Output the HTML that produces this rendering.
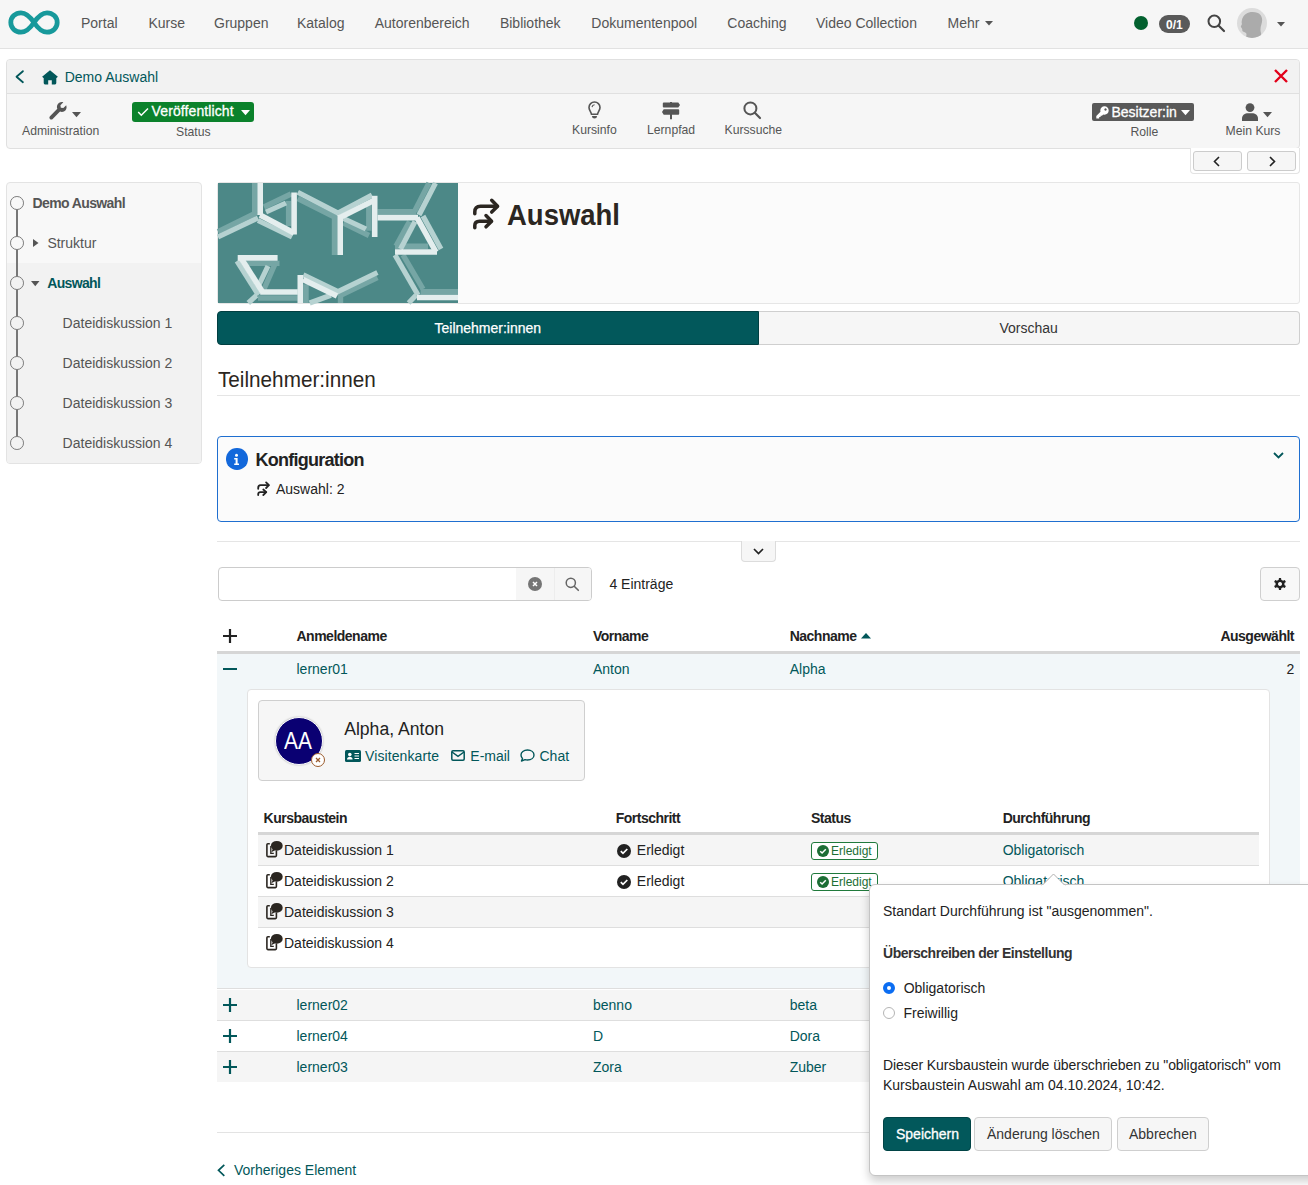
<!DOCTYPE html>
<html><head><meta charset="utf-8">
<style>
html,body{margin:0;padding:0;}
body{width:1308px;height:1185px;position:relative;overflow:hidden;background:#fff;font-family:"Liberation Sans",sans-serif;color:#222;}
.a{position:absolute;white-space:nowrap;line-height:1;}
.b{position:absolute;box-sizing:border-box;}
svg{position:absolute;overflow:visible;}
.nav{color:#555;font-size:14px;}
.lbl{color:#555;font-size:12.2px;}
.tl{color:#02575a;}
.th{font-weight:700;font-size:14px;letter-spacing:-0.5px;color:#222;}
</style></head><body>

<!-- NAV -->
<div class="b" style="left:0;top:0;width:1308px;height:49px;background:#f6f6f6;border-bottom:1px solid #e2e2e2;"></div>
<svg style="left:8px;top:10px" width="52" height="25" viewBox="0 0 52 25"><path d="M26,12.5 C22,6.5 18,2.8 13,2.8 C7.4,2.8 2.8,7 2.8,12.5 C2.8,18 7.4,22.2 13,22.2 C18,22.2 22,18.5 26,12.5 C30,6.5 34,2.8 39,2.8 C44.6,2.8 49.2,7 49.2,12.5 C49.2,18 44.6,22.2 39,22.2 C34,22.2 30,18.5 26,12.5 Z" fill="none" stroke="#17999b" stroke-width="4.8"/></svg>
<div class="a nav" style="left:81px;top:15.5px">Portal</div>
<div class="a nav" style="left:148.5px;top:15.5px">Kurse</div>
<div class="a nav" style="left:214px;top:15.5px">Gruppen</div>
<div class="a nav" style="left:297px;top:15.5px">Katalog</div>
<div class="a nav" style="left:374.7px;top:15.5px">Autorenbereich</div>
<div class="a nav" style="left:499.9px;top:15.5px">Bibliothek</div>
<div class="a nav" style="left:591.3px;top:15.5px">Dokumentenpool</div>
<div class="a nav" style="left:727.3px;top:15.5px">Coaching</div>
<div class="a nav" style="left:816px;top:15.5px">Video Collection</div>
<div class="a nav" style="left:947.6px;top:15.5px">Mehr</div>
<svg style="left:985px;top:21px" width="8" height="5" viewBox="0 0 8 5"><path d="M0,0 H8 L4,4.5 Z" fill="#555"/></svg>
<div class="b" style="left:1134px;top:16px;width:14px;height:14px;border-radius:50%;background:#03612f"></div>
<div class="b" style="left:1159px;top:15px;width:31px;height:18px;border-radius:9px;background:#5a5a5a"></div>
<div class="a" style="left:1166px;top:18.5px;font-size:12px;font-weight:700;color:#fff">0/1</div>
<svg style="left:1207px;top:13.5px" width="18" height="18" viewBox="0 0 18 18"><circle cx="7.3" cy="7.3" r="5.8" fill="none" stroke="#444" stroke-width="2"/><path d="M11.5,11.5 L17,17" stroke="#444" stroke-width="2.2" stroke-linecap="round"/></svg>
<div class="b" style="left:1237px;top:8px;width:30px;height:30px;border-radius:50%;background:#dcdcdc;overflow:hidden"><svg style="left:0;top:0" width="30" height="30" viewBox="0 0 30 30"><path d="M12,4.5 C16,3.5 21,4 23.5,7 C25.5,9.5 25.5,13 24.5,16 C23.5,19 23,22 24,25 L25,31 H9 L9.5,26 C9,24.5 7.5,24 6,23.5 C5,23 5.5,21.5 5,20.5 C4.5,19.5 3.5,19 4,18 L5,16 C4.5,15 4.5,13.5 5,12 C5.5,9 8,5.5 12,4.5 Z" fill="#ababab"/></svg></div>
<svg style="left:1277px;top:21.5px" width="8" height="5" viewBox="0 0 8 5"><path d="M0,0 H8 L4,4.5 Z" fill="#555"/></svg>

<!-- TOOLBAR -->
<div class="b" style="left:6px;top:59px;width:1294px;height:90px;border:1px solid #e0e0e0;border-radius:4px;background:#f6f6f6;overflow:hidden">
  <div class="b" style="left:0;top:0;width:100%;height:34px;background:#f2f2f2;border-bottom:1px solid #e0e0e0"></div>
</div>
<svg style="left:13.6px;top:69px" width="11" height="16" viewBox="0 0 11 16"><path d="M8.9,2.2 L2.5,7.7 L8.9,13.2" fill="none" stroke="#02575a" stroke-width="1.8" stroke-linecap="round" stroke-linejoin="round"/></svg>
<svg style="left:41.5px;top:69.5px" width="16" height="15" viewBox="0 0 16 15"><path d="M8,0.2 L15.9,6.7 L14.5,8.1 L14.3,7.9 V13.1 Q14.3,14.4 13,14.4 H9.8 V10.2 H6.2 V14.4 H3 Q1.7,14.4 1.7,13.1 V7.9 L1.5,8.1 L0.1,6.7 Z" fill="#02575a"/></svg>
<div class="a tl" style="left:64.7px;top:69.8px;font-size:14px">Demo Auswahl</div>

<svg style="left:49px;top:101.6px" width="18.4" height="17.6" viewBox="0 0 19 18"><path d="M17.8,3.2 L14.8,6.2 L12.2,5.8 L11.8,3.2 L14.8,0.2 C12.4,-0.5 9.6,0.6 8.6,3 C8,4.4 8.1,5.8 8.6,7 L1,14.6 C0.2,15.4 0.2,16.7 1,17.4 C1.8,18.2 3,18.2 3.8,17.4 L11.4,9.8 C12.6,10.3 14,10.4 15.4,9.8 C17.8,8.8 18.8,6 17.8,3.2 Z" fill="#555"/></svg>
<svg style="left:72.4px;top:111.7px" width="9" height="5.5" viewBox="0 0 9 5.5"><path d="M0,0 H9 L4.5,5.3 Z" fill="#555"/></svg>
<div class="a lbl" style="left:22px;top:124.5px">Administration</div>

<div class="b" style="left:132px;top:102px;width:122px;height:20px;border-radius:3px;background:#0b822b"></div>
<svg style="left:136.5px;top:106.5px" width="12" height="10" viewBox="0 0 12 10"><path d="M1.2,5 L4.3,8.2 L11,1.5" fill="none" stroke="#fff" stroke-width="1.5"/></svg>
<div class="a" style="left:151.6px;top:104.3px;font-size:14px;color:#fff;letter-spacing:0.1px;-webkit-text-stroke:0.3px #fff">Veröffentlicht</div>
<svg style="left:240.8px;top:109.5px" width="9" height="5.5" viewBox="0 0 9 5.5"><path d="M0,0 H9 L4.5,5.3 Z" fill="#fff"/></svg>
<div class="a lbl" style="left:176px;top:126px">Status</div>

<svg style="left:587.6px;top:101px" width="13" height="18" viewBox="0 0 13 18"><path d="M6.5,1 C3.4,1 1,3.4 1,6.5 C1,9.3 3,10.8 3.5,13.3 H9.5 C10,10.8 12,9.3 12,6.5 C12,3.4 9.6,1 6.5,1 Z" fill="none" stroke="#555" stroke-width="1.6"/><path d="M3.9,15 H9.1 Q8.9,17.6 6.5,17.6 Q4.1,17.6 3.9,15 Z" fill="#555"/><path d="M4,6.1 Q4.4,3.8 6.6,3.7" fill="none" stroke="#555" stroke-width="1.1"/></svg>
<div class="a lbl" style="left:572px;top:123.6px">Kursinfo</div>
<svg style="left:661.5px;top:101.5px" width="18" height="18" viewBox="0 0 18 18"><path d="M8,0 H10 V0.6 H16.3 L18,3 L16.3,5.4 H1.8 Q0.8,5.4 0.8,4.4 V1.6 Q0.8,0.6 1.8,0.6 H8 Z M1.7,7.3 H16.2 Q17.2,7.3 17.2,8.3 V11.8 Q17.2,12.8 16.2,12.8 H1.7 L0,10 Z M8,12.8 H10 V17.3 H8 Z" fill="#555"/></svg>
<div class="a lbl" style="left:647px;top:123.6px">Lernpfad</div>
<svg style="left:743px;top:101px" width="18" height="18" viewBox="0 0 18 18"><circle cx="7.4" cy="7.4" r="6" fill="none" stroke="#555" stroke-width="2"/><path d="M11.8,11.8 L17,17" stroke="#555" stroke-width="2.2" stroke-linecap="round"/></svg>
<div class="a lbl" style="left:724.5px;top:123.6px">Kurssuche</div>

<div class="b" style="left:1092px;top:103px;width:102px;height:18px;border-radius:2px;background:#595959"></div>
<svg style="left:1095.5px;top:105.5px" width="13" height="13" viewBox="0 0 13 13"><path d="M8.5,0.3 C10.8,0.3 12.7,2.2 12.7,4.5 C12.7,6.8 10.8,8.7 8.5,8.7 C8,8.7 7.6,8.6 7.2,8.5 L6,9.7 H4.6 V11.1 H3.2 V12.5 H0.3 V10 L4.5,5.8 C4.4,5.4 4.3,5 4.3,4.5 C4.3,2.2 6.2,0.3 8.5,0.3 Z M9.5,2.3 A1.2,1.2 0 1,0 9.51,2.3 Z" fill="#fff"/></svg>
<div class="a" style="left:1111.5px;top:104.6px;font-size:14px;color:#fff;-webkit-text-stroke:0.3px #fff">Besitzer:in</div>
<svg style="left:1181px;top:109.5px" width="9" height="5.5" viewBox="0 0 9 5.5"><path d="M0,0 H9 L4.5,5.3 Z" fill="#fff"/></svg>
<div class="a lbl" style="left:1130.4px;top:126px">Rolle</div>
<svg style="left:1241.5px;top:102.5px" width="16" height="18" viewBox="0 0 16 18"><circle cx="8" cy="4.6" r="4.4" fill="#555"/><path d="M0,18 V15.5 C0,12 3,10.2 6,10.2 H10 C13,10.2 16,12 16,15.5 V18 Z" fill="#555"/></svg>
<svg style="left:1263px;top:112px" width="9" height="5.5" viewBox="0 0 9 5.5"><path d="M0,0 H9 L4.5,5.3 Z" fill="#555"/></svg>
<div class="a lbl" style="left:1225.6px;top:124.7px">Mein Kurs</div>
<svg style="left:1274px;top:68.5px" width="14" height="14" viewBox="0 0 14 14"><path d="M1,1 L13,13 M13,1 L1,13" stroke="#e2001a" stroke-width="2.4"/></svg>

<!-- PAGER -->
<div class="b" style="left:1189.5px;top:148px;width:110.5px;height:25.5px;border:1px solid #e3e3e3;border-top:none;border-radius:0 0 4px 4px;background:#fff"></div>
<div class="b" style="left:1192.5px;top:151.4px;width:49px;height:19.5px;border:1px solid #ccc;border-radius:3px;background:#f6f6f6"></div>
<div class="b" style="left:1247.4px;top:151.4px;width:49px;height:19.5px;border:1px solid #ccc;border-radius:3px;background:#f6f6f6"></div>
<svg style="left:1213px;top:155.5px" width="7" height="11" viewBox="0 0 7 11"><path d="M6,1 L1.5,5.5 L6,10" fill="none" stroke="#222" stroke-width="1.6"/></svg>
<svg style="left:1268.5px;top:155.5px" width="7" height="11" viewBox="0 0 7 11"><path d="M1,1 L5.5,5.5 L1,10" fill="none" stroke="#222" stroke-width="1.6"/></svg>

<!-- MENU -->
<div class="b" style="left:6px;top:182px;width:196px;height:282px;border:1px solid #e3e3e3;border-radius:4px;background:#f8f8f8;overflow:hidden">
  <div class="b" style="left:0;top:80px;width:100%;height:201px;background:#f2f2f2"></div>
</div>
<div class="b" style="left:16px;top:203px;width:2px;height:240px;background:#777"></div>
<div class="b" style="left:10.2px;top:196px;width:13.8px;height:13.8px;border:1.8px solid #7a7a7a;border-radius:50%;background:#f8f8f8"></div>
<div class="b" style="left:10.2px;top:236px;width:13.8px;height:13.8px;border:1.8px solid #7a7a7a;border-radius:50%;background:#f8f8f8"></div>
<div class="b" style="left:10.2px;top:276px;width:13.8px;height:13.8px;border:1.8px solid #7a7a7a;border-radius:50%;background:#f2f2f2"></div>
<div class="b" style="left:10.2px;top:316px;width:13.8px;height:13.8px;border:1.8px solid #7a7a7a;border-radius:50%;background:#f2f2f2"></div>
<div class="b" style="left:10.2px;top:356px;width:13.8px;height:13.8px;border:1.8px solid #7a7a7a;border-radius:50%;background:#f2f2f2"></div>
<div class="b" style="left:10.2px;top:396px;width:13.8px;height:13.8px;border:1.8px solid #7a7a7a;border-radius:50%;background:#f2f2f2"></div>
<div class="b" style="left:10.2px;top:436px;width:13.8px;height:13.8px;border:1.8px solid #7a7a7a;border-radius:50%;background:#f2f2f2"></div>
<div class="a" style="left:32.6px;top:195.9px;font-size:14px;font-weight:700;color:#555;letter-spacing:-0.62px">Demo Auswahl</div>
<svg style="left:33px;top:239px" width="6" height="8" viewBox="0 0 6 8"><path d="M0,0 L5.5,4 L0,8 Z" fill="#555"/></svg>
<div class="a" style="left:47.4px;top:235.8px;font-size:14px;color:#555">Struktur</div>
<svg style="left:31.3px;top:281px" width="9" height="5.5" viewBox="0 0 9 5.5"><path d="M0,0 H8.5 L4.25,5.2 Z" fill="#555"/></svg>
<div class="a" style="left:47.2px;top:275.9px;font-size:14px;font-weight:700;color:#02575a;letter-spacing:-0.65px">Auswahl</div>
<div class="a" style="left:62.6px;top:316px;font-size:14px;color:#555">Dateidiskussion 1</div>
<div class="a" style="left:62.6px;top:356px;font-size:14px;color:#555">Dateidiskussion 2</div>
<div class="a" style="left:62.6px;top:396px;font-size:14px;color:#555">Dateidiskussion 3</div>
<div class="a" style="left:62.6px;top:436px;font-size:14px;color:#555">Dateidiskussion 4</div>

<!-- HEADER -->
<div class="b" style="left:217px;top:182px;width:1083px;height:122px;border:1px solid #e6e6e6;border-radius:3px;background:#fbfbfb"></div>
<svg style="left:218px;top:183px" width="240" height="120" viewBox="0 0 240 120"><rect width="240" height="120" fill="#4c8887"/><g fill="none" stroke-linecap="butt" stroke-linejoin="miter"><g stroke="#76a6a5" stroke-width="5.4"><path d="M36.7,0 V29.5"/><path d="M0,48.6 L39,29.5"/><path d="M70.6,17.9 V43"/><path d="M46,24 L73,11"/><path d="M79.8,15.5 L116.5,34 V72"/><path d="M150.8,21 V47.7"/><path d="M125.5,40 L151,52.5"/><path d="M159.5,28.7 H198"/><path d="M196.5,28.5 L211,0"/><path d="M191.5,38.5 L178,63"/><path d="M177,63.3 H210"/><path d="M28.4,80.4 H61.5"/><path d="M57,81 L46,106"/><path d="M40,115 H79.8"/><path d="M122.5,114 V120"/><path d="M88,101.3 V120"/><path d="M120,113.5 L159.4,94.5"/><path d="M185,72 L205,106"/><path d="M202.6,108.8 H240"/></g><g stroke="#b6d2d1" stroke-width="5.2"><path d="M0,54 L40,35"/><path d="M40,37.5 L74,54"/><path d="M48,29 L68,20"/><path d="M79.8,9.2 L120,30 L154,12.1"/><path d="M125.5,35.5 L148,46"/><path d="M201,32 L217.5,0"/><path d="M205,33 L223,66"/><path d="M197,38.5 L182.5,66"/><path d="M19,78 L40.5,112"/><path d="M50,83 L39,106"/><path d="M38.5,112.3 L30.3,120"/><path d="M85.3,91.9 L120,108.5 L159.4,89.5"/><path d="M91.7,120 L112.8,112.3"/><path d="M177,72 L200,112"/><path d="M198,112.3 L190.6,120"/></g><g stroke="#e4eeee" stroke-width="5.6"><path d="M42.2,0 V32"/><path d="M42,32 L76,50"/><path d="M76.1,9.5 V51.5"/><path d="M122,34.5 L156.7,17"/><path d="M122.2,32 V72"/><path d="M156.7,12.8 V54"/><path d="M159.5,34.6 H200"/><path d="M199,34.6 L218,69"/><path d="M177,69 H219"/><path d="M19.7,74.9 H59.6"/><path d="M23,75 L44.5,109"/><path d="M42.2,109 H79.8"/><path d="M82.3,92 V120"/><path d="M85,96.5 L119,113"/><path d="M199,114.5 H240"/></g></g></svg>
<svg style="left:465px;top:192px" width="40" height="43" viewBox="0 0 40 43"><g fill="none" stroke="#2b2621" stroke-width="3.5" stroke-linecap="round" stroke-linejoin="round"><path d="M26.7,8.3 L32.6,14.2 L26.7,20.1"/><path d="M32,14.2 H15.5 Q9.8,14.2 9.8,20 V21.8"/><path d="M21,23.6 L26.6,29.2 L21,34.8"/><path d="M26,29.2 H14.5 Q9.8,29.2 9.8,33.5 V35.8"/></g></svg>
<div class="a" style="left:506.5px;top:200px;font-size:30px;font-weight:700;color:#2b2621;transform:scaleX(0.916);transform-origin:0 0">Auswahl</div>

<!-- SEGMENTED -->
<div class="b" style="left:217px;top:311px;width:542px;height:34px;border:1px solid #013f41;border-radius:4px 0 0 4px;background:#02585b"></div>
<div class="b" style="left:759px;top:311px;width:541px;height:34px;border:1px solid #cfcfcf;border-left:none;border-radius:0 4px 4px 0;background:#f6f6f6"></div>
<div class="a" style="left:434.5px;top:320.8px;font-size:14px;color:#fff;-webkit-text-stroke:0.25px #fff">Teilnehmer:innen</div>
<div class="a" style="left:999.5px;top:320.8px;font-size:14px;color:#333">Vorschau</div>

<!-- H2 -->
<div class="a" style="left:217.6px;top:369px;font-size:22.4px;color:#2b2621;transform:scaleX(0.925);transform-origin:0 0">Teilnehmer:innen</div>
<div class="b" style="left:217px;top:395px;width:1083px;height:1px;background:#e5e5e5"></div>

<!-- INFO -->
<div class="b" style="left:217px;top:436px;width:1083px;height:86px;border:1px solid #1f6fd0;border-radius:4px;background:#fbfbfb"></div>
<div class="b" style="left:226.2px;top:448.3px;width:21.4px;height:21.4px;border-radius:50%;background:#1368db"></div>
<svg style="left:226.4px;top:448.6px" width="21" height="21" viewBox="0 0 21 21"><circle cx="10.5" cy="6.3" r="1.5" fill="#fff"/><path d="M8.2,9 H11.6 V14.6 H13 V16 H8.2 V14.6 H9.6 V10.4 H8.2 Z" fill="#fff"/></svg>
<div class="a" style="left:255.5px;top:450.8px;font-size:18px;font-weight:700;color:#222;letter-spacing:-0.75px">Konfiguration</div>
<svg style="left:1272.5px;top:452px" width="11" height="7" viewBox="0 0 11 7"><path d="M1,1 L5.5,5.5 L10,1" fill="none" stroke="#02575a" stroke-width="1.8"/></svg>
<svg style="left:252px;top:478px" width="24" height="22" viewBox="0 0 24 22"><g fill="none" stroke="#222" stroke-width="1.8" stroke-linecap="round" stroke-linejoin="round"><path d="M14.1,4.45 L16.9,7.2 L14.1,10"/><path d="M16.5,7.2 H8.6 Q6.2,7.2 6.2,10 V10.8"/><path d="M11.3,11.5 L14.3,14.1 L11.3,17"/><path d="M14,14.1 H8.4 Q6.2,14.1 6.2,16.2 V17"/></g></svg>
<div class="a" style="left:276px;top:481.6px;font-size:14px;color:#222">Auswahl: 2</div>

<!-- FILTER LINE -->
<div class="b" style="left:217px;top:541px;width:1083px;height:1px;background:#e5e5e5"></div>
<div class="b" style="left:741px;top:541px;width:35px;height:21px;border:1px solid #dcdcdc;border-top:none;border-radius:0 0 4px 4px;background:#f6f6f6"></div>
<svg style="left:753px;top:548px" width="11" height="7" viewBox="0 0 11 7"><path d="M1,1 L5.5,5.5 L10,1" fill="none" stroke="#222" stroke-width="1.7"/></svg>

<!-- SEARCH -->
<div class="b" style="left:217.5px;top:566.8px;width:374px;height:33.8px;border:1px solid #cccccc;border-radius:4px;background:#fff;overflow:hidden">
  <div class="b" style="left:297.5px;top:0;width:38px;height:100%;background:#f6f6f6"></div>
  <div class="b" style="left:335.5px;top:0;width:39px;height:100%;background:#f6f6f6;border-left:1px solid #ededed"></div>
</div>
<svg style="left:528px;top:576.7px" width="14" height="14" viewBox="0 0 14 14"><circle cx="7" cy="7" r="7" fill="#757575"/><path d="M5,5 L9,9 M9,5 L5,9" stroke="#fff" stroke-width="1.5"/></svg>
<svg style="left:564.5px;top:576.5px" width="14" height="14" viewBox="0 0 14 14"><circle cx="5.8" cy="5.8" r="4.6" fill="none" stroke="#666" stroke-width="1.5"/><path d="M9.2,9.2 L13.3,13.3" stroke="#666" stroke-width="1.6" stroke-linecap="round"/></svg>
<div class="a" style="left:609.4px;top:576.8px;font-size:14px;color:#222">4 Einträge</div>
<div class="b" style="left:1260px;top:567px;width:40px;height:34px;border:1px solid #cfcfcf;border-radius:4px;background:#f8f8f8"></div>
<svg style="left:1273px;top:577px" width="14" height="14" viewBox="0 0 14 14"><path d="M6,0 H8 L8.4,1.9 C9,2.1 9.5,2.4 10,2.8 L11.8,2.1 L12.9,3.9 L11.4,5.1 C11.5,5.7 11.5,6.3 11.4,6.9 L12.9,8.1 L11.8,9.9 L10,9.2 C9.5,9.6 9,9.9 8.4,10.1 L8,12 H6 L5.6,10.1 C5,9.9 4.5,9.6 4,9.2 L2.2,9.9 L1.1,8.1 L2.6,6.9 C2.5,6.3 2.5,5.7 2.6,5.1 L1.1,3.9 L2.2,2.1 L4,2.8 C4.5,2.4 5,2.1 5.6,1.9 Z M7,4 A2,2 0 1,0 7.01,4 Z" fill="#222" transform="translate(0,1)"/></svg>

<!-- TABLE HEADER -->
<svg style="left:223px;top:629px" width="14" height="14" viewBox="0 0 14 14"><path d="M7,0 V14 M0,7 H14" stroke="#222" stroke-width="2.2"/></svg>
<div class="a th" style="left:296.5px;top:629.2px">Anmeldename</div>
<div class="a th" style="left:592.9px;top:629.2px">Vorname</div>
<div class="a th" style="left:789.7px;top:629.2px">Nachname</div>
<svg style="left:861px;top:632.5px" width="10" height="6" viewBox="0 0 10 6"><path d="M0,5.5 L5,0 L10,5.5 Z" fill="#02575a"/></svg>
<div class="a th" style="left:1216px;top:629.2px;width:78px;text-align:right">Ausgewählt</div>
<div class="b" style="left:217px;top:651px;width:1083px;height:3px;background:#d6d6d6"></div>

<!-- ROW 1 expanded bg -->
<div class="b" style="left:217px;top:654px;width:1083px;height:335px;background:#f2f7f9;border-bottom:1px solid #dedede"></div>
<div class="b" style="left:223px;top:668px;width:14px;height:2.2px;background:#02575a"></div>
<div class="a tl" style="left:296.5px;top:661.8px;font-size:14px">lerner01</div>
<div class="a tl" style="left:593px;top:661.8px;font-size:14px">Anton</div>
<div class="a tl" style="left:789.7px;top:661.8px;font-size:14px">Alpha</div>
<div class="a" style="left:1286.5px;top:661.8px;font-size:14px;color:#222">2</div>

<!-- DETAIL BOX -->
<div class="b" style="left:247px;top:689px;width:1022.5px;height:279px;border:1px solid #e3e3e3;border-radius:4px;background:#fff"></div>
<div class="b" style="left:258.3px;top:700.3px;width:326.5px;height:81px;border:1px solid #cfcfcf;border-radius:4px;background:#f6f6f6"></div>
<div class="b" style="left:274.7px;top:716.8px;width:48.6px;height:48.6px;border-radius:50%;background:#0a0072;border:1.5px solid #fff;box-shadow:0 0 2px rgba(0,0,0,.3)"></div>
<div class="a" style="left:284.3px;top:730.3px;font-size:23.5px;color:#fff;transform:scaleX(0.89);transform-origin:0 0">AA</div>
<div class="b" style="left:311px;top:753px;width:14px;height:14px;border-radius:50%;background:#fff;border:1.6px solid #9b5b2c"></div>
<svg style="left:315px;top:757px" width="6" height="6" viewBox="0 0 6 6"><path d="M1,1 L5,5 M5,1 L1,5" stroke="#9b5b2c" stroke-width="1.3"/></svg>
<div class="a" style="left:344.2px;top:720.8px;font-size:17.6px;color:#222">Alpha, Anton</div>
<svg style="left:344.8px;top:750px" width="16" height="12" viewBox="0 0 16 12"><rect x="0" y="0" width="16" height="12" rx="1.5" fill="#02575a"/><circle cx="4.8" cy="4.6" r="1.8" fill="#fff"/><path d="M2,9.6 C2,7.6 3.3,7 4.8,7 C6.3,7 7.6,7.6 7.6,9.6 Z" fill="#fff"/><path d="M9.5,3.5 H14 M9.5,6 H14 M9.5,8.5 H14" stroke="#fff" stroke-width="1.2"/></svg>
<div class="a tl" style="left:365px;top:748.8px;font-size:14px;letter-spacing:0.1px">Visitenkarte</div>
<svg style="left:451px;top:750px" width="14" height="11" viewBox="0 0 14 11"><rect x="0.8" y="0.8" width="12.4" height="9.4" rx="1.2" fill="none" stroke="#02575a" stroke-width="1.5"/><path d="M1,2 L7,6.3 L13,2" fill="none" stroke="#02575a" stroke-width="1.5"/></svg>
<div class="a tl" style="left:470.3px;top:748.8px;font-size:14px">E-mail</div>
<svg style="left:520px;top:749px" width="15" height="13" viewBox="0 0 15 13"><path d="M7.5,1 C11.3,1 14,3.2 14,6 C14,8.8 11.3,11 7.5,11 C6.6,11 5.8,10.9 5,10.6 L1.5,12 L2.5,9.4 C1.5,8.5 1,7.3 1,6 C1,3.2 3.7,1 7.5,1 Z" fill="none" stroke="#02575a" stroke-width="1.4" stroke-linejoin="round"/></svg>
<div class="a tl" style="left:539.5px;top:748.8px;font-size:14px">Chat</div>

<!-- INNER TABLE -->
<div class="a th" style="left:263.6px;top:810.6px">Kursbaustein</div>
<div class="a th" style="left:615.7px;top:810.6px">Fortschritt</div>
<div class="a th" style="left:811px;top:810.6px">Status</div>
<div class="a th" style="left:1002.7px;top:810.6px">Durchführung</div>
<div class="b" style="left:258px;top:832px;width:1001px;height:3px;background:#d6d6d6"></div>
<div class="b" style="left:258px;top:835px;width:1001px;height:31px;background:#f5f5f5;border-bottom:1px solid #dedede"></div>
<div class="b" style="left:258px;top:866px;width:1001px;height:31px;background:#fff;border-bottom:1px solid #dedede"></div>
<div class="b" style="left:258px;top:897px;width:1001px;height:31px;background:#f5f5f5;border-bottom:1px solid #dedede"></div>
<div class="b" style="left:258px;top:928px;width:1001px;height:30px;background:#fff"></div>
<svg style="left:266px;top:841.0px" width="18" height="17" viewBox="0 0 18 17"><path d="M3.8,2.7 H1.9 Q0.9,2.7 0.9,3.7 V14.6 Q0.9,15.6 1.9,15.6 H9.4 Q10.4,15.6 10.4,14.6 V9.5" fill="none" stroke="#2b2621" stroke-width="1.6"/><path d="M4.8,5 V12.3 H7.8" fill="none" stroke="#2b2621" stroke-width="1.3"/><ellipse cx="10.8" cy="4.8" rx="5.9" ry="4.9" fill="#2b2621"/><path d="M7,7.5 L5.3,11.3 L9.5,9 Z" fill="#2b2621"/></svg>
<div class="a" style="left:284px;top:843.3px;font-size:14px;color:#222">Dateidiskussion 1</div>
<svg style="left:617.4px;top:843.5px" width="14" height="14" viewBox="0 0 14 14"><circle cx="7" cy="7" r="7" fill="#222"/><path d="M3.8,7.2 L6,9.4 L10.3,5" fill="none" stroke="#fff" stroke-width="1.7"/></svg>
<div class="a" style="left:636.8px;top:843.3px;font-size:14px;color:#222">Erledigt</div>
<div class="b" style="left:811px;top:841.5px;width:67px;height:18px;border:1px solid #207a3c;border-radius:3px;background:#fff"></div>
<svg style="left:816.8px;top:845.1px" width="12" height="12" viewBox="0 0 12 12"><circle cx="6" cy="6" r="6" fill="#1c6e35"/><path d="M3.2,6.2 L5.1,8 L8.8,4.2" fill="none" stroke="#fff" stroke-width="1.5"/></svg>
<div class="a" style="left:831px;top:845.3px;font-size:12px;color:#1c6e35">Erledigt</div>
<div class="a tl" style="left:1002.7px;top:843.3px;font-size:14px">Obligatorisch</div>
<svg style="left:266px;top:872.0px" width="18" height="17" viewBox="0 0 18 17"><path d="M3.8,2.7 H1.9 Q0.9,2.7 0.9,3.7 V14.6 Q0.9,15.6 1.9,15.6 H9.4 Q10.4,15.6 10.4,14.6 V9.5" fill="none" stroke="#2b2621" stroke-width="1.6"/><path d="M4.8,5 V12.3 H7.8" fill="none" stroke="#2b2621" stroke-width="1.3"/><ellipse cx="10.8" cy="4.8" rx="5.9" ry="4.9" fill="#2b2621"/><path d="M7,7.5 L5.3,11.3 L9.5,9 Z" fill="#2b2621"/></svg>
<div class="a" style="left:284px;top:874.3px;font-size:14px;color:#222">Dateidiskussion 2</div>
<svg style="left:617.4px;top:874.5px" width="14" height="14" viewBox="0 0 14 14"><circle cx="7" cy="7" r="7" fill="#222"/><path d="M3.8,7.2 L6,9.4 L10.3,5" fill="none" stroke="#fff" stroke-width="1.7"/></svg>
<div class="a" style="left:636.8px;top:874.3px;font-size:14px;color:#222">Erledigt</div>
<div class="b" style="left:811px;top:872.5px;width:67px;height:18px;border:1px solid #207a3c;border-radius:3px;background:#fff"></div>
<svg style="left:816.8px;top:876.1px" width="12" height="12" viewBox="0 0 12 12"><circle cx="6" cy="6" r="6" fill="#1c6e35"/><path d="M3.2,6.2 L5.1,8 L8.8,4.2" fill="none" stroke="#fff" stroke-width="1.5"/></svg>
<div class="a" style="left:831px;top:876.3px;font-size:12px;color:#1c6e35">Erledigt</div>
<div class="a tl" style="left:1002.7px;top:874.3px;font-size:14px">Obligatorisch</div>
<svg style="left:266px;top:903.0px" width="18" height="17" viewBox="0 0 18 17"><path d="M3.8,2.7 H1.9 Q0.9,2.7 0.9,3.7 V14.6 Q0.9,15.6 1.9,15.6 H9.4 Q10.4,15.6 10.4,14.6 V9.5" fill="none" stroke="#2b2621" stroke-width="1.6"/><path d="M4.8,5 V12.3 H7.8" fill="none" stroke="#2b2621" stroke-width="1.3"/><ellipse cx="10.8" cy="4.8" rx="5.9" ry="4.9" fill="#2b2621"/><path d="M7,7.5 L5.3,11.3 L9.5,9 Z" fill="#2b2621"/></svg>
<div class="a" style="left:284px;top:905.3px;font-size:14px;color:#222">Dateidiskussion 3</div>
<svg style="left:266px;top:934.0px" width="18" height="17" viewBox="0 0 18 17"><path d="M3.8,2.7 H1.9 Q0.9,2.7 0.9,3.7 V14.6 Q0.9,15.6 1.9,15.6 H9.4 Q10.4,15.6 10.4,14.6 V9.5" fill="none" stroke="#2b2621" stroke-width="1.6"/><path d="M4.8,5 V12.3 H7.8" fill="none" stroke="#2b2621" stroke-width="1.3"/><ellipse cx="10.8" cy="4.8" rx="5.9" ry="4.9" fill="#2b2621"/><path d="M7,7.5 L5.3,11.3 L9.5,9 Z" fill="#2b2621"/></svg>
<div class="a" style="left:284px;top:936.3px;font-size:14px;color:#222">Dateidiskussion 4</div>
<div class="b" style="left:217px;top:990px;width:1083px;height:31px;background:#f5f5f5;border-bottom:1px solid #dedede;"></div>
<svg style="left:223px;top:998px" width="14" height="14" viewBox="0 0 14 14"><path d="M7,0 V14 M0,7 H14" stroke="#02575a" stroke-width="2.2"/></svg>
<div class="a tl" style="left:296.5px;top:998.3px;font-size:14px">lerner02</div>
<div class="a tl" style="left:593px;top:998.3px;font-size:14px">benno</div>
<div class="a tl" style="left:789.7px;top:998.3px;font-size:14px">beta</div>
<div class="b" style="left:217px;top:1021px;width:1083px;height:31px;background:#fff;border-bottom:1px solid #dedede;"></div>
<svg style="left:223px;top:1029px" width="14" height="14" viewBox="0 0 14 14"><path d="M7,0 V14 M0,7 H14" stroke="#02575a" stroke-width="2.2"/></svg>
<div class="a tl" style="left:296.5px;top:1029.3px;font-size:14px">lerner04</div>
<div class="a tl" style="left:593px;top:1029.3px;font-size:14px">D</div>
<div class="a tl" style="left:789.7px;top:1029.3px;font-size:14px">Dora</div>
<div class="b" style="left:217px;top:1052px;width:1083px;height:30px;background:#f5f5f5;"></div>
<svg style="left:223px;top:1060px" width="14" height="14" viewBox="0 0 14 14"><path d="M7,0 V14 M0,7 H14" stroke="#02575a" stroke-width="2.2"/></svg>
<div class="a tl" style="left:296.5px;top:1060.3px;font-size:14px">lerner03</div>
<div class="a tl" style="left:593px;top:1060.3px;font-size:14px">Zora</div>
<div class="a tl" style="left:789.7px;top:1060.3px;font-size:14px">Zuber</div>
<!-- FOOTER -->
<div class="b" style="left:217px;top:1132px;width:1083px;height:1px;background:#e3e3e3"></div>
<svg style="left:216.5px;top:1163.5px" width="9" height="13" viewBox="0 0 9 13"><path d="M7.3,0.8 L1.5,6.3 L7.3,11.8" fill="none" stroke="#02575a" stroke-width="1.7"/></svg>
<div class="a tl" style="left:234px;top:1162.8px;font-size:14px">Vorheriges Element</div>

<!-- POPOVER -->
<div class="b" style="left:868.5px;top:884px;width:460px;height:291.5px;border:1px solid #c4c4c4;border-radius:6px;background:#fff;box-shadow:0 5px 10px rgba(0,0,0,.2)"></div>
<svg style="left:1042px;top:873px" width="23" height="13" viewBox="0 0 23 13"><path d="M0,12.5 L11.5,1 L23,12.5" fill="#fff" stroke="#b0b0b0" stroke-width="1"/><rect x="0" y="12" width="23" height="2" fill="#fff"/></svg>
<div class="a" style="left:883px;top:903.8px;font-size:14px;color:#222">Standart Durchführung ist "ausgenommen".</div>
<div class="a" style="left:883px;top:946.4px;font-size:14px;font-weight:700;color:#333;letter-spacing:-0.48px">Überschreiben der Einstellung</div>
<div class="b" style="left:883px;top:982.3px;width:12px;height:12px;border-radius:50%;background:#fff;border:4px solid #0b6df2"></div>
<div class="a" style="left:903.7px;top:981.3px;font-size:14px;color:#222">Obligatorisch</div>
<div class="b" style="left:883px;top:1007px;width:12px;height:12px;border-radius:50%;background:#fff;border:1px solid #b5b5b5"></div>
<div class="a" style="left:903.5px;top:1006.0px;font-size:14px;color:#222">Freiwillig</div>
<div class="a" style="left:883px;top:1058.1px;font-size:14px;color:#222;letter-spacing:-0.07px">Dieser Kursbaustein wurde überschrieben zu "obligatorisch" vom</div>
<div class="a" style="left:883px;top:1078.0px;font-size:14px;color:#222">Kursbaustein Auswahl am 04.10.2024, 10:42.</div>
<div class="b" style="left:883px;top:1117px;width:88px;height:34px;border-radius:4px;background:#02585b;border:1px solid #014446"></div>
<div class="a" style="left:896px;top:1126.6px;font-size:14px;color:#fff;-webkit-text-stroke:0.3px #fff">Speichern</div>
<div class="b" style="left:974.4px;top:1117px;width:138px;height:34px;border-radius:4px;background:#f6f6f6;border:1px solid #cfcfcf"></div>
<div class="a" style="left:987px;top:1126.6px;font-size:14px;color:#333">Änderung löschen</div>
<div class="b" style="left:1116.5px;top:1117px;width:92px;height:34px;border-radius:4px;background:#f6f6f6;border:1px solid #cfcfcf"></div>
<div class="a" style="left:1129px;top:1126.6px;font-size:14px;color:#333">Abbrechen</div>
</body></html>
